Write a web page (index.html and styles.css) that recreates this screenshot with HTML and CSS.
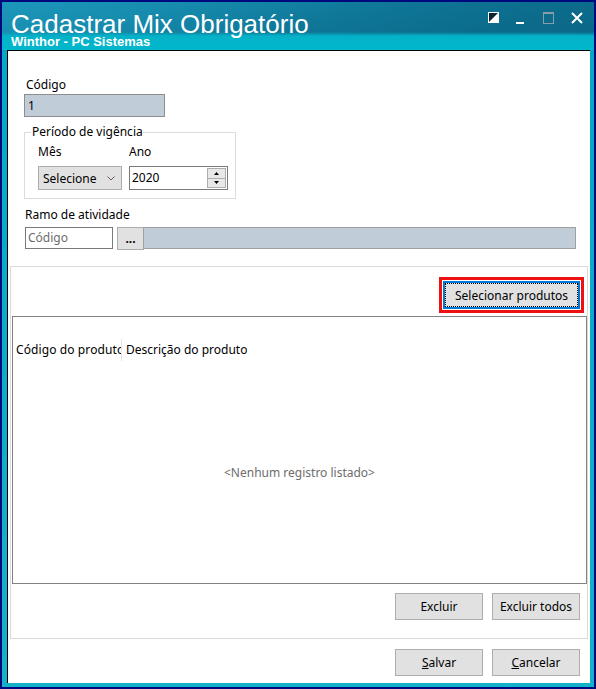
FILE: index.html
```html
<!DOCTYPE html>
<html lang="pt-BR">
<head>
<meta charset="utf-8">
<title>Cadastrar Mix Obrigatório</title>
<link rel="stylesheet" href="styles.css">
</head>
<body>
<div class="window">
  <div class="titlebar">
    <div class="titles">
      <div class="title">Cadastrar Mix Obrigatório</div>
      <div class="subtitle">Winthor - PC Sistemas</div>
    </div>
    <div class="caps">
      <svg class="cap cap-split" width="11" height="11" viewBox="0 0 11 11"><rect x="0.5" y="0.5" width="10" height="10" fill="#0b2533" stroke="#fff"/><polygon points="10,1 10,10 1,10" fill="#fff"/></svg>
      <span class="cap cap-min"></span>
      <svg class="cap cap-max" width="11" height="12" viewBox="0 0 11 12"><rect x="0.5" y="0.5" width="10" height="11" fill="none" stroke="#8a9ca6"/><rect x="0" y="0" width="11" height="2" fill="#8a9ca6"/></svg>
      <svg class="cap cap-close" width="12" height="12" viewBox="0 0 12 12"><path d="M1 1L11 11M11 1L1 11" stroke="#fff" stroke-width="2"/></svg>
    </div>
  </div>

  <div class="client">
    <div class="form">
      <span class="lbl">Código</span>
      <div class="field code-field">1</div>

      <fieldset class="period">
        <legend>Período de vigência</legend>
        <div class="period-row">
          <div class="col">
            <span class="lbl lbl-flush">Mês</span>
            <div class="combo">
              <span>Selecione</span>
              <svg width="8" height="5" viewBox="0 0 8 5"><polyline points="0.5,0.5 4,4 7.5,0.5" fill="none" stroke="#606060"/></svg>
            </div>
          </div>
          <div class="col col-year">
            <span class="lbl lbl-flush">Ano</span>
            <div class="spin">
              <span class="spin-value">2020</span>
              <div class="spin-btns">
                <span class="spin-btn"><svg width="5" height="3" viewBox="0 0 5 3"><polygon points="2.5,0 5,3 0,3" fill="#000"/></svg></span>
                <span class="spin-btn"><svg width="5" height="3" viewBox="0 0 5 3"><polygon points="0,0 5,0 2.5,3" fill="#000"/></svg></span>
              </div>
            </div>
          </div>
        </div>
      </fieldset>

      <span class="lbl lbl-ramo">Ramo de atividade</span>
      <div class="ramo-row">
        <div class="field ramo-code">Código</div>
        <button class="btn btn-dots">...</button>
        <div class="field ramo-desc"></div>
      </div>
    </div>

    <div class="panel">
      <div class="panel-top">
        <div class="highlight">
          <button class="btn btn-focus">Selecionar produtos</button>
        </div>
      </div>
      <div class="grid">
        <div class="grid-head">
          <div class="gcol gcol-code">Código do produto</div>
          <div class="gcol gcol-desc">Descrição do produto</div>
        </div>
        <div class="grid-empty">&lt;Nenhum registro listado&gt;</div>
      </div>
      <div class="actions actions-panel">
        <button class="btn btn-act">Excluir</button>
        <button class="btn btn-act">Excluir todos</button>
      </div>
    </div>

    <div class="actions actions-footer">
      <button class="btn btn-act"><u>S</u>alvar</button>
      <button class="btn btn-act"><u>C</u>ancelar</button>
    </div>
  </div>
</div>
</body>
</html>
```

FILE: styles.css
```css
* {
  box-sizing: border-box;
}

html,
body {
  margin: 0;
  padding: 0;
}

body {
  width: 596px;
  height: 689px;
  overflow: hidden;
  font-family: "Noto Sans", "Open Sans", sans-serif;
  font-size: 12px;
  color: #000;
}

/* window frame */
.window {
  width: 596px;
  height: 689px;
  border: 2px solid #00087e;
  display: flex;
  flex-direction: column;
  background: linear-gradient(to bottom, #0b6787 0, #0d7897 30px, #05a9c4 50px, #12b2c9 100%);
}

.titlebar {
  flex: none;
  height: 48px;
  display: flex;
  justify-content: space-between;
  padding: 10px 11px 0 8px;
  background:
    linear-gradient(to bottom, rgba(0, 180, 200, 0) 0, rgba(0, 180, 200, 0) 30px, #04b2c8 34px, #00b7cc 48px),
    linear-gradient(165deg, #1c97ba 0%, #168bad 25%, #0f7798 50%, #0c6c8c 75%, #0b6585 100%);
}

.title {
  font-family: "Liberation Sans", Arial, sans-serif;
  font-size: 26px;
  line-height: 24px;
  color: #fff;
  white-space: nowrap;
  margin-left: 1px;
}

.subtitle {
  font-family: "Liberation Sans", Arial, sans-serif;
  font-weight: bold;
  font-size: 13px;
  line-height: 11px;
  color: #fff;
  margin-left: 1px;
}

.caps {
  display: flex;
  align-items: flex-start;
}

.cap {
  flex: none;
  display: block;
}

.cap-split {
  margin-right: 17px;
}

.cap-min {
  width: 8px;
  height: 2px;
  margin-top: 10px;
  margin-right: 19px;
  background: #fff;
}

.cap-max {
  margin-right: 17px;
}

/* client area */
.client {
  flex: 1;
  margin: 0 4px 4px 5px;
  background: #fff;
  border-left: 1px solid #000;
  border-top: 1px solid #000;
  display: flex;
  flex-direction: column;
}

.form {
  padding: 26px 0 0 16px;
  display: flex;
  flex-direction: column;
  align-items: flex-start;
}

.lbl {
  display: block;
  line-height: 16px;
  margin-left: 2px;
  white-space: nowrap;
}

.lbl-flush {
  margin-left: 0;
}

.field {
  border: 1px solid #8e8e8e;
  white-space: nowrap;
}

.code-field {
  margin-top: 1px;
  width: 141px;
  height: 23px;
  line-height: 21px;
  padding-left: 3px;
  background: #c0ccd8;
}

/* período de vigência group */
.period {
  margin: 7px 0 0 0;
  width: 212px;
  min-width: 0;
  border: 1px solid #dcdcdc;
  padding: 4px 0 8px 6px;
}

.period legend {
  padding: 0 0 0 1px;
  line-height: 16px;
}

.period-row {
  display: flex;
  margin-left: 7px;
}

.col-year {
  margin-left: 7px;
}

.combo {
  margin-top: 6px;
  width: 84px;
  height: 24px;
  background: #e1e1e1;
  border: 1px solid #adadad;
  display: flex;
  align-items: center;
  justify-content: space-between;
  padding: 0 6px 0 4px;
}

.combo svg {
  display: block;
}

.spin {
  margin-top: 6px;
  width: 99px;
  height: 24px;
  border: 1px solid #7a7a7a;
  display: flex;
  justify-content: space-between;
  padding: 1px 1px 0 2px;
}

.spin-value {
  line-height: 20px;
}

.spin-btns {
  width: 19px;
  height: 20px;
  display: flex;
  flex-direction: column;
}

.spin-btn {
  flex: 1;
  border: 1px solid #adadad;
  background: #e8e8e8;
  display: flex;
  align-items: center;
  justify-content: center;
}

.spin-btn + .spin-btn {
  border-top: none;
}

.spin-btn svg {
  display: block;
}

/* ramo de atividade */
.lbl-ramo {
  margin-top: 8px;
  margin-left: 1px;
}

.ramo-row {
  margin-top: 4px;
  display: flex;
  align-items: flex-start;
}

.ramo-code {
  margin-left: 1px;
  width: 88px;
  height: 22px;
  line-height: 20px;
  padding-left: 2px;
  color: #6d6d6d;
  border-color: #7a7a7a;
}

.btn {
  font: inherit;
  color: #000;
  background: #e1e1e1;
  border: 1px solid #adadad;
  padding: 0;
  margin: 0;
  display: flex;
  align-items: center;
  justify-content: center;
  white-space: nowrap;
}

.btn-dots {
  margin-left: 4px;
  width: 27px;
  height: 23px;
  font-weight: bold;
  padding-bottom: 2px;
  align-items: flex-end;
}

.ramo-desc {
  margin-left: -1px;
  width: 433px;
  height: 22px;
  background: #c0ccd8;
  border-color: #a0a0a0;
}

/* product panel */
.panel {
  margin: 16px 2px 0 2px;
  height: 373px;
  border: 1px solid #dadada;
  display: flex;
  flex-direction: column;
  padding: 10px 0 18px 0;
}

.panel-top {
  display: flex;
  justify-content: flex-end;
  padding-right: 3px;
}

.highlight {
  border: 3px solid #ee1111;
  padding: 1px;
  background: #fff;
}

.btn-focus {
  width: 137px;
  height: 28px;
  border: 2px solid #0078d7;
  outline: 1px dotted #000;
  outline-offset: -3px;
}

.grid {
  margin: 3px 0 0 1px;
  height: 268px;
  border: 1px solid #828282;
  display: flex;
  flex-direction: column;
}

.grid-head {
  margin-top: 22px;
  height: 22px;
  line-height: 22px;
  display: flex;
}

.gcol {
  white-space: nowrap;
  overflow: hidden;
}

.gcol-code {
  width: 109px;
  padding-left: 3px;
  border-right: 1px solid #e3e3e3;
  letter-spacing: 0.1px;
}

.gcol-desc {
  padding-left: 4px;
}

.grid-empty {
  flex: 1;
  display: flex;
  align-items: center;
  justify-content: center;
  color: #6d6d6d;
}

.actions {
  display: flex;
  justify-content: flex-end;
  gap: 9px;
}

.actions-panel {
  margin-top: 9px;
  padding-right: 7px;
}

.actions-footer {
  margin-top: 10px;
  padding-right: 10px;
}

.btn-act {
  width: 88px;
  height: 27px;
}
```
